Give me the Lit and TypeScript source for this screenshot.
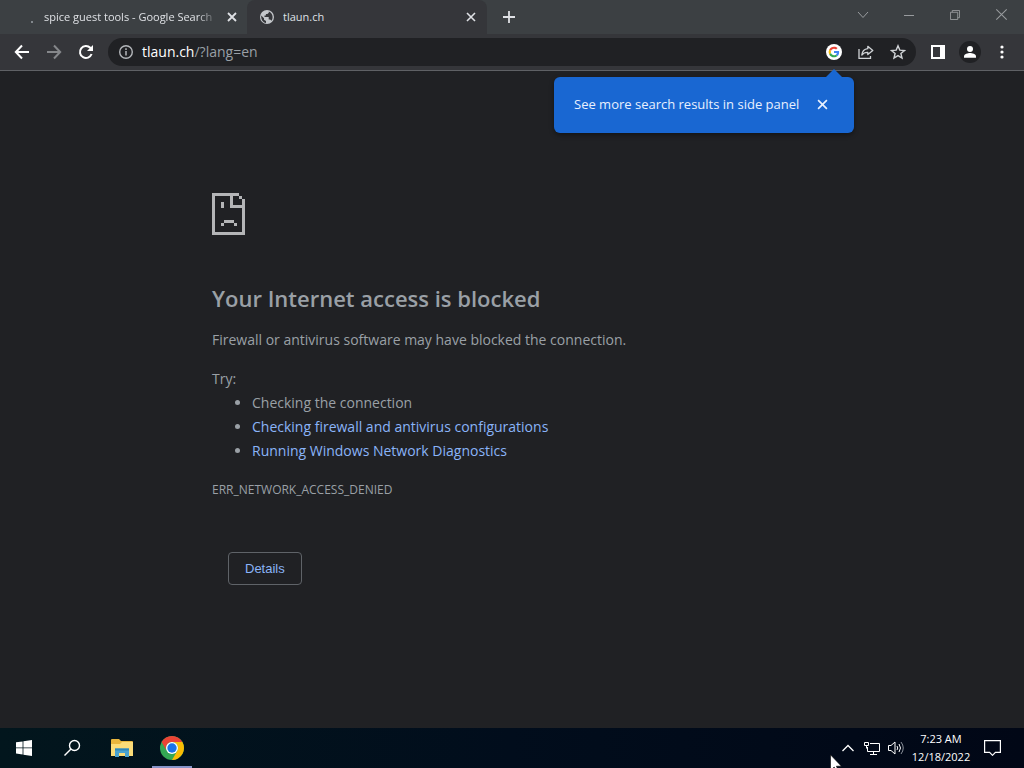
import { LitElement, html, css, svg } from "lit";
import { customElement } from "lit/decorators.js";

const cross = (size: number, width: number) => html`
  <svg width=${size} height=${size} viewBox="0 0 10 10" aria-hidden="true">
    <path d="M1 1L9 9M9 1L1 9" fill="none" stroke="currentColor" stroke-width=${width} />
  </svg>`;

const googleMark = svg`
  <path fill="#ea4335" d="M24 9.5c3.5 0 6.700 1.200 9.200 3.600l6.900-6.900C35.900 2.400 30.500 0 24 0 14.600 0 6.500 5.400 2.600 13.200l8 6.200C12.400 13.700 17.700 9.500 24 9.500z"/>
  <path fill="#4285f4" d="M47 24.600c0-1.600-.2-3.100-.4-4.600H24v9h12.900c-.6 3-2.300 5.500-4.800 7.200l7.700 6c4.500-4.200 7.200-10.400 7.200-17.600z"/>
  <path fill="#fbbc05" d="M10.500 28.600A14.500 14.500 0 0 1 10.500 19.400l-8-6.200a24 24 0 0 0 0 21.600z"/>
  <path fill="#34a853" d="M24 48c6.500 0 11.900-2.100 15.900-5.800l-7.700-6c-2.200 1.500-4.900 2.300-8.200 2.300-6.300 0-11.600-4.200-13.500-9.900l-8 6.200C6.500 42.600 14.600 48 24 48z"/>`;

@customElement("browser-tabs")
class BrowserTabs extends LitElement {
  static styles = css`
    :host { display: block; background: #3c4043; color: #dfe1e5; font: 11px/16px "Open Sans", "Noto Sans", sans-serif; }
    button { border: 0; padding: 0; background: none; color: inherit; font: inherit; display: grid; place-items: center; }
    .strip { display: flex; height: 34px; }
    .tab { display: flex; align-items: center; flex: 0 1 240px; min-width: 0; box-sizing: border-box; padding: 0 10px 0 12px; gap: 8px; }
    .idle { flex-basis: 247px; padding: 0 9px 0 20px; }
    .active { background: #35363a; border-radius: 8px 8px 0 0; }
    .icon { flex: none; width: 16px; height: 16px; }
    .title { flex: 1; min-width: 0; overflow: hidden; white-space: nowrap; }
    .fade { -webkit-mask-image: linear-gradient(to right, #000 88%, transparent); mask-image: linear-gradient(to right, #000 88%, transparent); }
    .close { width: 12px; height: 16px; flex: none; }
    .new { width: 28px; height: 34px; margin-left: 8px; }
    .window { display: flex; margin-left: auto; color: #989b9e; }
    .window button { width: 46px; height: 29px; }
  `;
  render() {
    return html`
      <div class="strip">
        <div class="tab idle">
          <svg class="icon" viewBox="0 0 16 16"><circle cx="12" cy="13" r="1" fill="#9aa0a6" /></svg>
          <span class="title fade">spice guest tools - Google Search</span>
          <button class="close" aria-label="Close tab">${cross(10, 1.8)}</button>
        </div>
        <div class="tab active">
          <svg class="icon" viewBox="0 0 16 16">
            <circle cx="8" cy="8" r="7" fill="#c4c7cb" />
            <path d="M2.200 6.500L5 9.200v1.500l2 1.200v2c-3-.4-5-3-4.800-7.400zM9.800 2.400v1.400L8.400 5H6.900v1.600H5.500V8h4.200v2.400h1.500l1.300 1.300c2-2.800 1.500-7.400-2.700-9.300z" fill="#35363a" />
          </svg>
          <span class="title">tlaun.ch</span>
          <button class="close" aria-label="Close tab">${cross(10, 1.6)}</button>
        </div>
        <button class="new" aria-label="New tab">
          <svg width="12" height="12" viewBox="0 0 12 12"><path d="M6 0v12M0 6h12" stroke="currentColor" stroke-width="1.800" /></svg>
        </button>
        <div class="window">
          <button aria-label="Search tabs"><svg width="12" height="8" viewBox="0 0 12 8"><path d="M1 1l5 5.500L11 1" fill="none" stroke="currentColor" /></svg></button>
          <button aria-label="Minimize"><svg width="10" height="10" viewBox="0 0 10 10"><path d="M0 5.500h10" stroke="currentColor" /></svg></button>
          <button aria-label="Restore"><svg width="10" height="10" viewBox="0 0 11 11"><path d="M.5 2.500h8v8h-8zM2.500 2.500v-2h8v8h-2" fill="none" stroke="currentColor" /></svg></button>
          <button aria-label="Close">${cross(13, 0.8)}</button>
        </div>
      </div>`;
  }
}

@customElement("browser-toolbar")
class BrowserToolbar extends LitElement {
  static styles = css`
    :host { display: block; background: #35363a; border-bottom: 1px solid #5f6165; color: #fff; font: 14px/20px "Open Sans", "Noto Sans", sans-serif; }
    button { border: 0; padding: 0; background: none; color: inherit; display: grid; place-items: center; width: 32px; height: 28px; }
    .bar { display: flex; align-items: center; height: 36px; padding: 0 6px; }
    .dim { color: #85878a; }
    .omnibox { flex: 1; display: flex; align-items: center; height: 28px; margin: 0 6px; background: #202124; border-radius: 14px; color: #d0d3d6; padding: 0 2px; }
    .info { color: #b4b7bb; }
    .address { flex: 1; color: #9aa0a6; }
    .host { color: #fff; }
  `;
  render() {
    return html`
      <div class="bar">
        <button aria-label="Back"><svg width="16" height="16" viewBox="0 0 16 16"><path d="M15 8H2M8 1.500L1.800 8 8 14.500" fill="none" stroke="currentColor" stroke-width="2" /></svg></button>
        <button class="dim" aria-label="Forward"><svg width="16" height="16" viewBox="0 0 16 16"><path d="M1 8h13M8 1.500L14.200 8 8 14.500" fill="none" stroke="currentColor" stroke-width="2" /></svg></button>
        <button aria-label="Reload"><svg width="16" height="16" viewBox="0 0 16 16"><path d="M13.600 10A6 6 0 1 1 12.300 3.800L14 5.500" fill="none" stroke="currentColor" stroke-width="2" /><path d="M15 1v6H9z" fill="currentColor" /></svg></button>
        <div class="omnibox">
          <button class="info" aria-label="Site information"><svg width="16" height="16" viewBox="0 0 16 16"><circle cx="8" cy="8" r="6.300" fill="none" stroke="currentColor" stroke-width="1.400" /><path d="M8 7v4.500M8 4.300V6" stroke="currentColor" stroke-width="1.500" /></svg></button>
          <span class="address"><span class="host">tlaun.ch</span>/?lang=en</span>
          <button aria-label="Side panel search"><svg width="16" height="16" viewBox="-12 -12 72 72"><circle cx="24" cy="24" r="36" fill="#fff" />${googleMark}</svg></button>
          <button aria-label="Share"><svg width="16" height="16" viewBox="0 0 16 16" fill="none" stroke="currentColor" stroke-width="1.300"><path d="M1 5v9.300h11.500V12" /><path d="M9.800 2.300L14.800 6.500 9.800 10.600V8.300C7 8.200 5.300 9 3.800 11 4.200 7.500 6.200 5.200 9.800 4.700z" stroke-linejoin="round" /></svg></button>
          <button aria-label="Bookmark"><svg width="16" height="16" viewBox="0 0 16 16"><path d="M8 1.800l1.800 4.300 4.700.4-3.600 3 1.100 4.600L8 11.600l-4 2.500 1.100-4.600-3.600-3 4.700-.4z" fill="none" stroke="currentColor" stroke-width="1.400" /></svg></button>
        </div>
        <button aria-label="Side panel"><svg width="14" height="14" viewBox="0 0 14 14"><path d="M0 0h14v14H0zM2 2v10h7V2z" fill="currentColor" fill-rule="evenodd" /></svg></button>
        <button aria-label="Profile"><svg width="22" height="22" viewBox="0 0 22 22"><circle cx="11" cy="11" r="11" fill="#202124" /><circle cx="11" cy="8" r="3" fill="currentColor" /><path d="M5 16.800v-1.500c0-2.200 4-3.300 6-3.300s6 1.100 6 3.300v1.500z" fill="currentColor" /></svg></button>
        <button aria-label="Menu"><svg width="4" height="14" viewBox="0 0 4 14" fill="currentColor"><circle cx="2" cy="2" r="1.600" /><circle cx="2" cy="7" r="1.600" /><circle cx="2" cy="12" r="1.600" /></svg></button>
      </div>`;
  }
}

@customElement("search-bubble")
class SearchBubble extends LitElement {
  static styles = css`
    :host { position: absolute; top: 77px; right: 170px; z-index: 1; font: 13px/20px "Open Sans", "Noto Sans", sans-serif; }
    .bubble { display: flex; align-items: center; justify-content: space-between; box-sizing: border-box; min-width: 300px; padding: 17px 22px 19px 20px; gap: 10px; white-space: nowrap; background: #1967d2; border-radius: 6px; color: #e8f0fe; box-shadow: 0 2px 5px #0006; }
    .bubble::before { content: ""; position: absolute; bottom: 100%; right: 12px; border: 8px solid transparent; border-top: 0; border-bottom-color: #1967d2; }
    button { border: 0; padding: 0; background: none; color: inherit; display: grid; place-items: center; width: 20px; height: 20px; }
  `;
  render() {
    return html`<div class="bubble" role="dialog"><span>See more search results in side panel</span><button aria-label="Close">${cross(11, 1.5)}</button></div>`;
  }
}

@customElement("error-page")
class ErrorPage extends LitElement {
  static styles = css`
    :host { display: block; flex: 1; min-height: 0; overflow: hidden; background: #202124; color: #9aa0a6; font: 14px/24px "Open Sans", "Noto Sans", sans-serif; }
    .content { max-width: 600px; margin: 0 auto; padding-top: 122px; }
    .sad { display: block; color: #b4b5b7; }
    h1 { margin: 47px 0 14px; font-size: 22px; line-height: 32px; font-weight: 600; }
    p { margin: 0 0 15px; }
    .try { margin: 0; }
    ul { margin: 0 0 15px; padding-left: 40px; }
    a { color: #8ab4f8; text-decoration: none; }
    .code { font-size: 12px; margin: 0 0 50px; }
    .details { margin-left: 16px; padding: 0 16px; height: 33px; border: 1px solid #5f6368; border-radius: 4px; background: none; color: #8ab4f8; font: 13px/16px "Liberation Sans", Arial, sans-serif; }
  `;
  render() {
    return html`
      <main class="content">
        <svg class="sad" width="33" height="42" viewBox="0 0 33 42" fill="currentColor" aria-hidden="true" shape-rendering="crispEdges">
          <path d="M0 0h27v3h3v3h3v36H0zM3 3v36h27V15H18V3zM21 3v9h9V6h-3V3z" fill-rule="evenodd" />
          <path d="M9 9h3v6H9zM12 27h10v3H12zM9 30h3v3H9zM22 30h3v3h-3z" />
        </svg>
        <h1>Your Internet access is blocked</h1>
        <p>Firewall or antivirus software may have blocked the connection.</p>
        <p class="try">Try:</p>
        <ul>
          <li>Checking the connection</li>
          <li><a href="#firewall">Checking firewall and antivirus configurations</a></li>
          <li><a href="#diagnostics">Running Windows Network Diagnostics</a></li>
        </ul>
        <p class="code">ERR_NETWORK_ACCESS_DENIED</p>
        <button class="details">Details</button>
      </main>`;
  }
}

@customElement("desktop-taskbar")
class DesktopTaskbar extends LitElement {
  static styles = css`
    :host { display: block; background: linear-gradient(to right, #02161d, #010d1c 50%, #010716); color: #fff; font: 11px/18px "Open Sans", "Noto Sans", sans-serif; }
    button { border: 0; padding: 0; background: none; color: inherit; font: inherit; display: grid; place-items: center; height: 40px; width: 48px; }
    .row { display: flex; }
    .apps { display: flex; }
    .apps .app { width: 52px; }
    .apps .running { width: 40px; margin-left: 4px; border-bottom: 2px solid #8794c8; padding-top: 2px; }
    .tray { display: flex; margin-left: auto; padding-right: 14px; }
    .tray .small { width: 24px; }
    .tray .clock { width: 66px; text-align: center; }
    .tray .notice { width: 36px; }
  `;
  render() {
    return html`
      <div class="row">
        <div class="apps">
          <button aria-label="Start"><svg width="16" height="16" viewBox="0 0 16 16" fill="#fff"><path d="M0 2.300L6.600 1.400v6.100H0zM7.400 1.300L16 0v7.500H7.400zM0 8.300h6.600v6.200L0 13.600zM7.400 8.300H16V16l-8.600-1.300z" /></svg></button>
          <button aria-label="Search"><svg width="18" height="18" viewBox="0 0 18 18" fill="none" stroke="#fff" stroke-width="1.400"><circle cx="11.500" cy="6.500" r="5" /><path d="M8 10L1.500 16.500" /></svg></button>
          <button class="app" aria-label="File Explorer"><svg width="22" height="18" viewBox="0 0 22 18"><path d="M0 1q0-1 1-1h7l2 2h11q1 0 1 1v14H0z" fill="#e9b63d" /><path d="M0 5h9l2-2h11v14H0z" fill="#fbdc78" /><path d="M4 9.500h14V18h-4v-4H8v4H4z" fill="#4ba3cf" /><path d="M4 9.500h14v2H4z" fill="#2e86b8" /></svg></button>
          <button class="running" aria-label="Google Chrome"><svg width="24" height="24" viewBox="0 0 24 24">
            <circle cx="12" cy="12" r="12" fill="#34a853" />
            <path d="M1.610 6A12 12 0 0 1 22.390 6H12A6 6 0 0 0 6.800 15z" fill="#ea4335" />
            <path d="M22.390 6A12 12 0 0 1 12 24L17.200 15A6 6 0 0 0 12 6z" fill="#fbbc04" />
            <circle cx="12" cy="12" r="6" fill="#fff" /><circle cx="12" cy="12" r="4.700" fill="#1a73e8" />
          </svg></button>
        </div>
        <div class="tray">
          <button class="small" aria-label="Show hidden icons"><svg width="12" height="8" viewBox="0 0 12 8"><path d="M.5 7L6 1.500 11.500 7" fill="none" stroke="#fff" stroke-width="1.300" /></svg></button>
          <button class="small" aria-label="Network"><svg width="16" height="14" viewBox="0 0 16 14" fill="none" stroke="#fff"><path d="M6 2.500h9.500v8H3.500V6M9.500 10.500v3M6 13.500h7M.5 1.500h4v3h-4zM2.500 4.500v3" /></svg></button>
          <button class="small" aria-label="Volume"><svg width="16" height="14" viewBox="0 0 16 14" fill="none" stroke="#fff"><path d="M.5 4.500h2.500L7 1v12L3 9.500H.5zM9 5q1.500 2 0 4M11 3q3 4 0 8" /><path d="M13 1q4.500 6 0 12" stroke="#8a909a" /></svg></button>
          <button class="clock"><span>7:23 AM<br />12/18/2022</span></button>
          <button class="notice" aria-label="Notifications"><svg width="17" height="16" viewBox="0 0 17 16"><path d="M.6.6h15.800v11.800h-5L8.500 15.300l-2.900-2.900h-5z" fill="none" stroke="#fff" stroke-width="1.200" /></svg></button>
        </div>
      </div>`;
  }
}

@customElement("app-root")
class AppRoot extends LitElement {
  static styles = css`
    :host { display: flex; flex-direction: column; height: 100vh; position: relative; overflow: hidden; background: #202124; }
    .cursor { position: absolute; right: 182px; bottom: -6px; z-index: 2; pointer-events: none; }
  `;
  render() {
    return html`
      <browser-tabs></browser-tabs>
      <browser-toolbar></browser-toolbar>
      <error-page></error-page>
      <desktop-taskbar></desktop-taskbar>
      <search-bubble></search-bubble>
      <svg class="cursor" width="12" height="20" viewBox="0 0 12 20" aria-hidden="true"><path d="M.5.8v15.700l3.700-3.500 2.500 5.800 2.200-1-2.500-5.600h5z" fill="#fff" stroke="#000" stroke-width=".6" /></svg>`;
  }
}
